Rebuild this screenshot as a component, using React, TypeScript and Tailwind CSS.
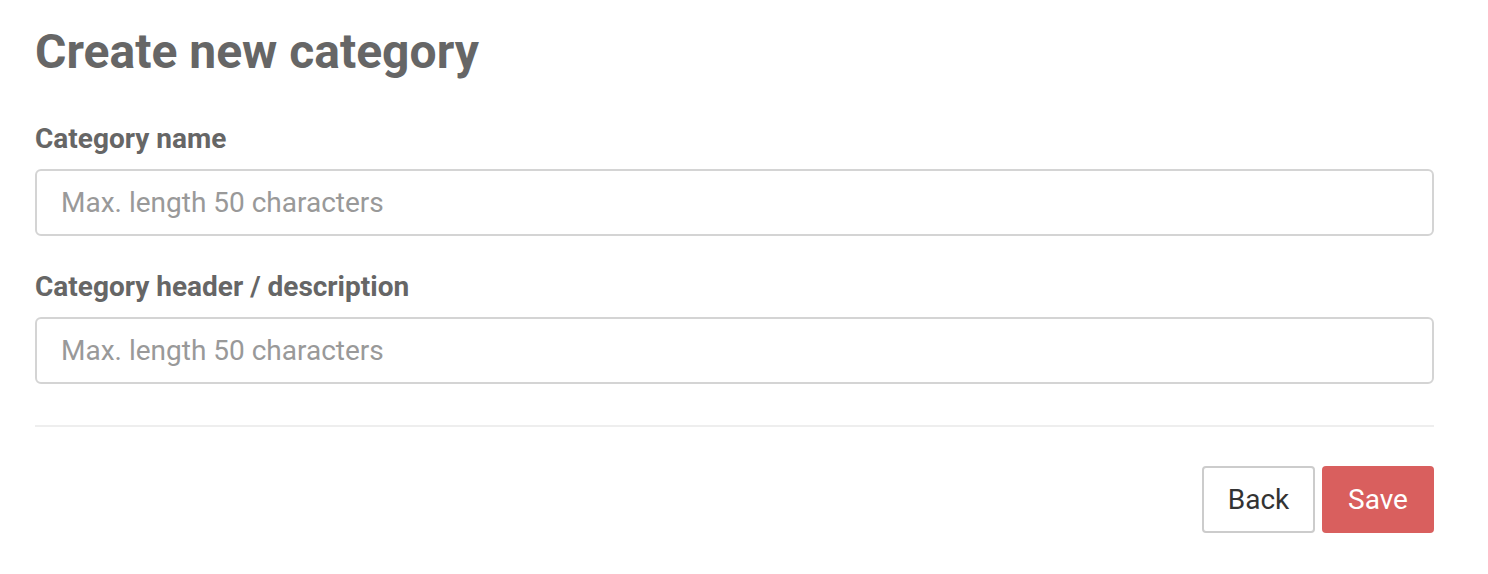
import React from "react";

export default function App() {
  return (
    <div className="min-h-[574px] bg-white pl-[35px] pr-[54px] pt-[22px]" style={{ fontFamily: "Roboto, 'Liberation Sans', sans-serif" }}>
      <h1 className="text-[48px] leading-[60px] font-bold text-[#666]">Create new category</h1>
      <div className="mt-[41px]">
        <label className="block text-[28px] leading-[32px] font-bold text-[#666]">Category name</label>
        <input
          className="mt-[14px] block h-[67px] w-full rounded-[6px] border-2 border-[#d4d4d4] px-[24px] text-[28px] text-[#555] placeholder:text-[#999] outline-none"
          placeholder="Max. length 50 characters"
        />
      </div>
      <div className="mt-[35px]">
        <label className="block text-[28px] leading-[32px] font-bold text-[#666]">Category header / description</label>
        <input
          className="mt-[14px] block h-[67px] w-full rounded-[6px] border-2 border-[#d4d4d4] px-[24px] text-[28px] text-[#555] placeholder:text-[#999] outline-none"
          placeholder="Max. length 50 characters"
        />
      </div>
      <div className="mt-[41px] h-[2px] bg-[#eeeeee]" />
      <div className="mt-[39px] flex justify-end gap-[7px]">
        <button className="h-[67px] w-[113px] rounded-[4px] border-2 border-[#cccccc] bg-white text-[28px] text-[#333]">Back</button>
        <button className="h-[67px] w-[112px] rounded-[4px] bg-[#d95f5e] text-[28px] text-white">Save</button>
      </div>
    </div>
  );
}
